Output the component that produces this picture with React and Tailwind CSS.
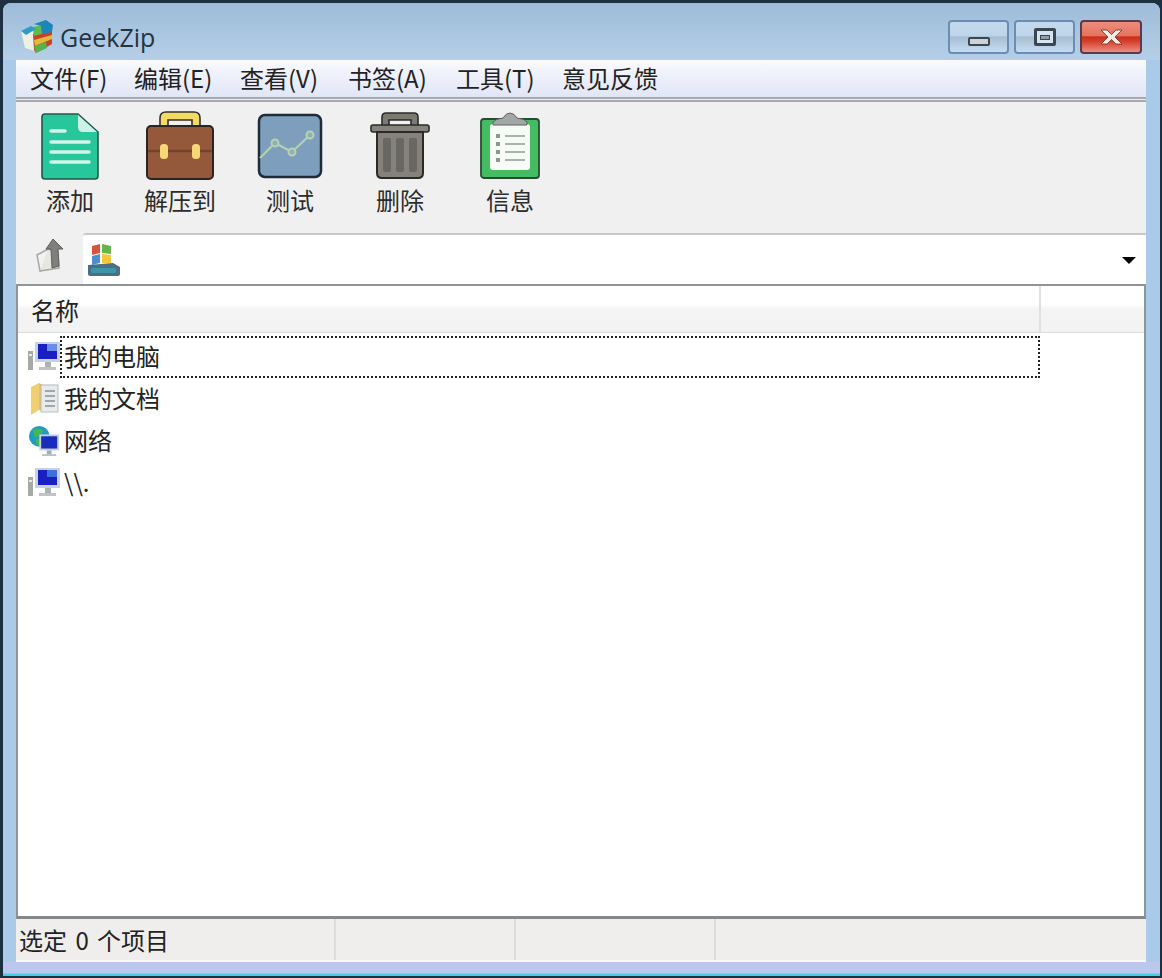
const cjk = { fontFamily: '"Noto Sans CJK SC", "Noto Sans", sans-serif' };

function AppLogo() {
  return (
    <svg width="34" height="34" viewBox="0 0 34 34">
      <path d="M1 11 L13 8 L15 31 L5 28 Z" fill="#eef0e4" />
      <path d="M13 14 L32 10 L32 24 L16 33 L14 30 Z" fill="#c8402c" />
      <path d="M14 20 L32 15 L32 19 L15 26 Z" fill="#e3b93a" />
      <path d="M14 26 L26 22 L27 28 L16 33 Z" fill="#58b14c" />
      <path d="M13 7 L24 5 L25 13 L14 16 Z" fill="#5dbb4a" />
      <path d="M14 4 L26 0 L33 5 L32 12 L22 14 L21 6 Z" fill="#1c86b8" />
      <path d="M1 11 L11 6 L16 9 L6 15 Z" fill="#2f9bc8" />
    </svg>
  );
}

function WinButton({ red, children, className }) {
  return (
    <div
      className={`h-[34px] rounded-[4px] border-2 flex items-center justify-center relative overflow-hidden ${className} ${
        red ? "border-[#5a3a4c] bg-[linear-gradient(#eb8d80_0%,#e5735f_45%,#c9301a_50%,#d5412c_65%,#ea8f80_100%)]" : "border-[#6a8db3] bg-[linear-gradient(#c6daee_0%,#bdd4ea_45%,#a6bccf_50%,#b4cade_70%,#c4dcf2_100%)]"
      }`}
    >
      {children}
    </div>
  );
}

function AddIcon() {
  return (
    <svg width="58" height="67" viewBox="0 0 58 67">
      <path d="M4 1 H37 L57 19 V63 Q57 66 54 66 H4 Q1 66 1 63 V4 Q1 1 4 1 Z" fill="#27c79b" stroke="#23564c" strokeWidth="1.6" />
      <path d="M37 2 L56 19 H42 Q37 19 37 14 Z" fill="#cdf1e6" />
      <g stroke="#d3f4e9" strokeWidth="3.5" strokeLinecap="round">
        <line x1="10" y1="18" x2="24" y2="18" />
        <line x1="10" y1="29" x2="48" y2="29" />
        <line x1="10" y1="39" x2="48" y2="39" />
        <line x1="10" y1="49" x2="48" y2="49" />
      </g>
    </svg>
  );
}
function CaseIcon() {
  return (
    <svg width="70" height="70" viewBox="0 0 70 70">
      <path d="M15 18 V7 Q15 1 21 1 H49 Q55 1 55 7 V18 H47 V9 H23 V18 Z" fill="#f3da62" stroke="#33302a" strokeWidth="1.6" />
      <rect x="2" y="15" width="66" height="53" rx="4" fill="#94593a" stroke="#2c2420" strokeWidth="2" />
      <line x1="3" y1="40" x2="67" y2="40" stroke="#74442b" strokeWidth="2.5" />
      <rect x="15" y="33" width="8" height="15" rx="3.5" fill="#f5d775" />
      <rect x="47" y="33" width="8" height="15" rx="3.5" fill="#f5d775" />
    </svg>
  );
}
function ChartIcon() {
  return (
    <svg width="66" height="66" viewBox="0 0 66 66">
      <rect x="2" y="2" width="62" height="62" rx="6" fill="#7d9fbd" stroke="#1f2c38" strokeWidth="2.5" />
      <path d="M3 45 L18 30 L35 39 L53 22" fill="none" stroke="#b6d2ae" strokeWidth="2" />
      <g fill="#8fb0b8" stroke="#b6d2ae" strokeWidth="2">
        <circle cx="18" cy="30" r="3.5" />
        <circle cx="35" cy="39" r="3.5" />
        <circle cx="53" cy="22" r="3.5" />
      </g>
    </svg>
  );
}
function TrashIcon() {
  return (
    <svg width="62" height="70" viewBox="0 0 62 70">
      <path d="M13 15 V6 Q13 2 17 2 H45 Q49 2 49 6 V15 H42 V9 H20 V15 Z" fill="#7d7a74" stroke="#2a2a28" strokeWidth="1.6" />
      <rect x="2" y="14" width="58" height="7" rx="2" fill="#86837d" stroke="#2a2a28" strokeWidth="1.6" />
      <path d="M8 21 H54 V62 Q54 67 49 67 H13 Q8 67 8 62 Z" fill="#85827c" stroke="#2a2a28" strokeWidth="2" />
      <g fill="#696762">
        <rect x="14" y="27" width="8" height="34" rx="2" />
        <rect x="27" y="27" width="8" height="34" rx="2" />
        <rect x="40" y="27" width="8" height="34" rx="2" />
      </g>
    </svg>
  );
}
function ClipIcon() {
  return (
    <svg width="62" height="68" viewBox="0 0 62 68">
      <rect x="2" y="7" width="58" height="59" rx="3" fill="#45bb62" stroke="#2a4a35" strokeWidth="1.8" />
      <rect x="11" y="12" width="40" height="46" rx="3" fill="#f7fbf5" />
      <path d="M14 10 Q16 7 24 6 Q27 1 31 1 Q35 1 38 6 Q46 7 48 10 L48 13 H14 Z" fill="#a3a8a6" stroke="#5d6462" strokeWidth="1" />
      <g stroke="#aab2ad" strokeWidth="2">
        <line x1="26" y1="24" x2="46" y2="24" />
        <line x1="26" y1="32" x2="46" y2="32" />
        <line x1="26" y1="40" x2="46" y2="40" />
        <line x1="26" y1="48" x2="46" y2="48" />
      </g>
      <g fill="#8b9a90">
        <rect x="17" y="22" width="4" height="4" />
        <rect x="17" y="30" width="4" height="4" />
        <rect x="17" y="38" width="4" height="4" />
        <rect x="17" y="46" width="4" height="4" />
      </g>
    </svg>
  );
}
function UpIcon() {
  return (
    <svg width="30" height="36" viewBox="0 0 30 36">
      <path d="M1 17 L12 11 L13 28 L4 33 Z" fill="#f2f2f0" stroke="#a8a8a4" strokeWidth="1.5" />
      <path d="M12 11 L22 14 L23 30 L4 33" fill="#e6e6e2" stroke="#a8a8a4" strokeWidth="1.5" />
      <path d="M17 1 L27 11 L22 11 L23 28 L16 30 L15 11 L10 11 Z" fill="#7f7f7c" stroke="#5f5f5d" strokeWidth="1" />
    </svg>
  );
}
function DriveIcon() {
  return (
    <svg width="34" height="34" viewBox="0 0 34 34">
      <path d="M5 3 L13 1 L13 10 L5 12 Z" fill="#d9543c" />
      <path d="M15 1 L24 3 L24 11 L15 10 Z" fill="#69b446" />
      <path d="M5 13 L13 11 L13 20 L5 22 Z" fill="#4b8fd0" />
      <path d="M15 11 L24 12 L24 20 L15 20 Z" fill="#f0c93a" />
      <path d="M1 22 L26 20 L33 24 V31 Q33 33 31 33 H3 Q1 33 1 31 Z" fill="#4a6f86" />
      <rect x="4" y="25" width="25" height="5" rx="1" fill="#3d95a8" />
    </svg>
  );
}
function PcIcon({ dim }) {
  return (
    <svg width="32" height="30" viewBox="0 0 32 30">
      <rect x="0" y="9" width="5" height="19" fill="#a5a9a8" />
      <rect x="1" y="12" width="3" height="2" fill="#e8e8e8" />
      <rect x="7" y="0" width="25" height="20" fill="#c9d2e4" />
      <rect x="10" y="2" width="19" height="15" fill="#1a1fc4" />
      <rect x="19" y="2" width="10" height="7" fill={dim ? "#3f6fd8" : "#6a8ce8"} />
      <rect x="17" y="20" width="6" height="5" fill="#adb2b2" />
      <rect x="11" y="25" width="17" height="3" fill="#c0c4c4" />
    </svg>
  );
}
function FolderDocIcon() {
  return (
    <svg width="30" height="34" viewBox="0 0 30 34">
      <path d="M2 5 L10 1 V28 L2 33 Z" fill="#f0cf72" />
      <path d="M10 1 L14 3 V29 L10 28 Z" fill="#e8c060" />
      <rect x="12" y="3" width="17" height="27" fill="#e7ebea" stroke="#b8bcbc" />
      <g stroke="#7f8a92" strokeWidth="1.4">
        <line x1="16" y1="9" x2="26" y2="9" />
        <line x1="16" y1="14" x2="26" y2="14" />
        <line x1="16" y1="19" x2="26" y2="19" />
        <line x1="16" y1="24" x2="26" y2="24" />
      </g>
    </svg>
  );
}
function NetIcon() {
  return (
    <svg width="34" height="34" viewBox="0 0 34 34">
      <circle cx="12" cy="12" r="11" fill="#1f9cc4" />
      <path d="M5 5 Q12 2 16 6 L12 12 L7 13 Z M8 15 L14 15 L14 22 L9 21 Z" fill="#42b84e" />
      <rect x="12" y="10" width="21" height="17" fill="#c5d0dc" />
      <rect x="14" y="12" width="17" height="13" fill="#1a2cbc" />
      <rect x="20" y="27" width="5" height="4" fill="#9fb0bc" />
      <rect x="15" y="31" width="15" height="2" fill="#b5c0c8" />
    </svg>
  );
}

const tools = [
  ["添加", AddIcon],
  ["解压到", CaseIcon],
  ["测试", ChartIcon],
  ["删除", TrashIcon],
  ["信息", ClipIcon],
];

const menus = [
  ["文件(F)", "w-[104px]"],
  ["编辑(E)", "w-[106px]"],
  ["查看(V)", "w-[108px]"],
  ["书签(A)", "w-[108px]"],
  ["工具(T)", "w-[106px]"],
  ["意见反馈", "w-[100px]"],
];

const rows = [
  ["我的电脑", <PcIcon />],
  ["我的文档", <FolderDocIcon />],
  ["网络", <NetIcon />],
  ["\\\\.", <PcIcon dim />],
];

export default function App() {
  return (
    <div className="w-[1162px] h-[978px] bg-[#1d3040] overflow-hidden text-[#222] pt-[3px] pl-[3px] pr-[2px]" style={cjk}>
      <div className="h-[975px] rounded-t-[8px] flex flex-col bg-[#a9cbe9] overflow-hidden">
        <div className="h-[57px] shrink-0 flex items-center pt-[11px] pl-[17px] pr-[18px] bg-[linear-gradient(#9dbbd8,#b6cfe8)]">
          <AppLogo />
          <span className="ml-[6px] text-[25px] leading-none text-[#25343f]" style={{ fontFamily: '"Open Sans", sans-serif' }}>GeekZip</span>
          <div className="ml-auto flex gap-[5px]">
            <WinButton className="w-[61px]">
              <div className="w-[22px] h-[9px] mt-[9px] bg-[#c9d3dc] border-2 border-[#3b4650] rounded-[2px]" />
            </WinButton>
            <WinButton className="w-[61px]">
              <div className="w-[22px] h-[18px] border-[3px] border-[#3b4650] bg-[#d7e3ee] rounded-[2px] flex items-center justify-center">
                <div className="w-[10px] h-[5px] bg-[#8f9ea9] border border-[#3b4650]" />
              </div>
            </WinButton>
            <WinButton red className="w-[62px]">
              <svg width="23" height="16" viewBox="0 0 23 16">
                <path d="M1 1 H7 L11.5 5.5 L16 1 H22 L15 8 L22 15 H16 L11.5 10.5 L7 15 H1 L8 8 Z" fill="#f3ebe4" stroke="#6a2f2a" strokeWidth="0.8" />
              </svg>
            </WinButton>
          </div>
        </div>

        <div className="flex-1 min-h-0 ml-[13px] mr-[14px] flex flex-col bg-[#f0f0f0]">
          <div className="h-[37px] shrink-0 flex items-center pl-[14px] pb-[2px] bg-[linear-gradient(#fbfbfe_0%,#f0f2fb_35%,#e1e6f7_100%)]">
            {menus.map(([m, w]) => (
              <span key={m} className={`${w} whitespace-nowrap leading-none text-[24px]`}>{m}</span>
            ))}
          </div>
          <div className="h-[5px] shrink-0 border-t-2 border-b-2 border-t-[#a9a9ab] border-b-[#a9a9ab] bg-[#ededf5]" />

          <div className="h-[131px] shrink-0 flex pt-[9px] bg-[#f0f0f0]">
            {tools.map(([label, Icon]) => (
              <div key={label} className="w-[110px] flex flex-col items-center -translate-x-[1px]">
                <div className="h-[70px] flex items-center justify-center"><Icon /></div>
                <span className="mt-[4px] text-[24px] leading-[30px] text-[#2c2c2c]">{label}</span>
              </div>
            ))}
          </div>

          <div className="h-[51px] shrink-0 flex items-stretch">
            <div className="w-[67px] shrink-0 flex items-center justify-center pl-[2px] pb-[6px]"><UpIcon /></div>
            <div className="flex-1 bg-white border-t-2 border-t-[#c8c8c8] flex items-center pl-[4px] pr-[10px] rounded-tl-[3px]">
              <DriveIcon />
              <svg className="ml-auto mt-[2px]" width="14" height="7" viewBox="0 0 14 7"><path d="M0 0 H14 L7 7 Z" fill="#000" /></svg>
            </div>
          </div>

          <div className="flex-1 min-h-0 flex flex-col bg-white border-2 border-[#8f9499] border-b-[3px] border-b-[#85888a]">
            <div className="h-[47px] shrink-0 flex border-b border-b-[#dcdcdc] bg-[linear-gradient(#ffffff_0%,#ffffff_40%,#f4f4f4_50%,#f2f2f2_100%)]">
              <div className="w-[1023px] border-r-2 border-r-[#e0e0e0] pl-[13px] pt-[1px] flex items-center text-[24px] leading-none">名称</div>
            </div>
            <div className="pt-[3px] flex flex-col">
              {rows.map(([name, icon], i) => (
                <div key={i} className="h-[42px] flex items-center pl-[10px]">
                  <div className="w-[32px] h-[34px] shrink-0 flex items-center justify-center">{icon}</div>
                  <div className={`w-[980px] h-[42px] pl-[2px] pb-[2px] flex items-center text-[24px] leading-none whitespace-nowrap border-2 ${i === 0 ? "border-dotted border-[#222]" : "border-transparent"}`}>{name}</div>
                </div>
              ))}
            </div>
          </div>

          <div className="h-[43px] shrink-0 flex bg-[#f0eded] text-[24px] border-b-2 border-b-[#f9f9f9]">
            <div className="w-[320px] pl-[3px] flex items-center border-r-2 border-r-[#dedbdb] whitespace-pre leading-none [word-spacing:3px]">选定 0 个项目</div>
            <div className="w-[180px] border-r-2 border-r-[#dedbdb]" />
            <div className="w-[200px] border-r-2 border-r-[#dedbdb]" />
          </div>
        </div>
        <div className="h-[16px] shrink-0 bg-[linear-gradient(#bcc7ee_0%,#bcc7ee_70%,#3fd0e8_75%,#3fd0e8_85%,#1d3040_85%)]" />
      </div>
    </div>
  );
}
